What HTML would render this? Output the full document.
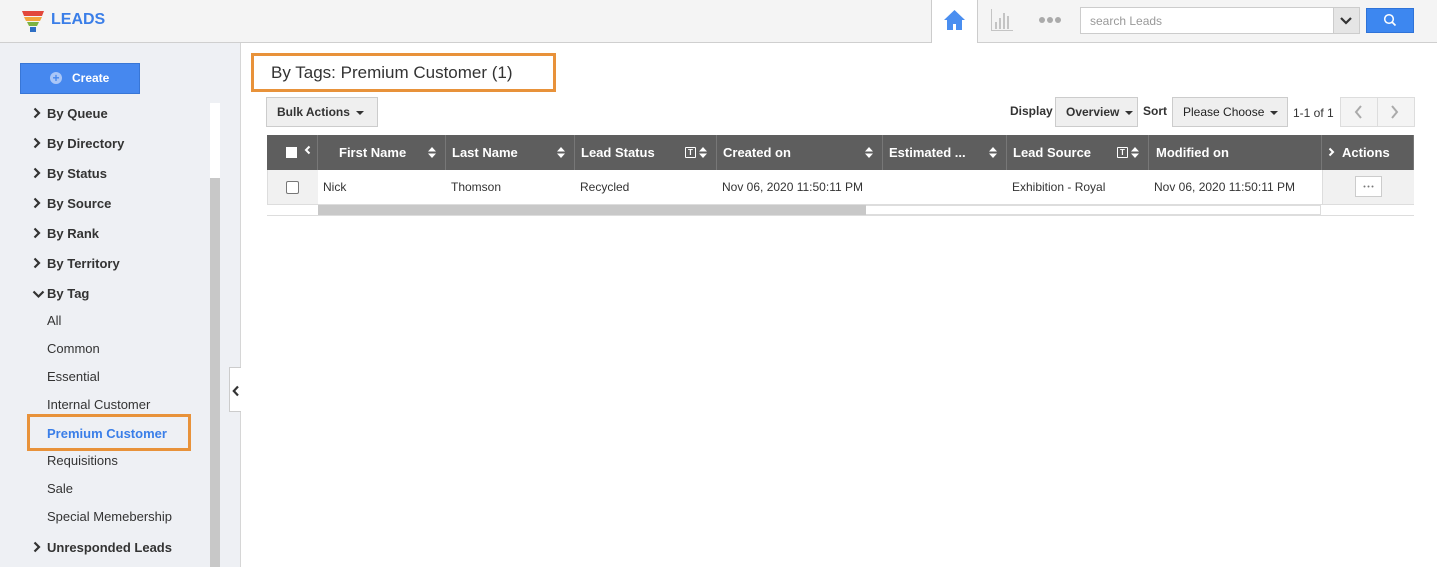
<!DOCTYPE html>
<html><head><meta charset="utf-8"><style>
*{box-sizing:border-box;margin:0;padding:0}
body{width:1437px;height:567px;overflow:hidden;font-family:"Liberation Sans",Arial,sans-serif;background:#fff;position:relative;color:#333}
.a{position:absolute}
.hdr{left:0;top:0;width:1437px;height:43px;background:#f4f4f4;border-bottom:1px solid #cfcfcf}
.side{left:0;top:43px;width:241px;height:524px;background:#eef0f4;border-right:1px solid #d6d6d6}
.nav{left:47px;font-size:13px;font-weight:bold;color:#333}
.sub{left:47px;font-size:13px;color:#333}
.chev{left:33px;width:8px;height:12px}
.th{top:135px;height:35px;background:#5e5e5e;color:#fff;font-size:13px;font-weight:bold;line-height:35px;padding-left:8px;border-right:1px solid #777}
.td{top:170px;height:35px;font-size:12px;line-height:35px;padding-left:5px;border-bottom:1px solid #ddd;background:#fff}
.srt{position:absolute;right:9px;top:12px;width:8px;height:11px}
.flt{position:absolute;right:20px;top:12px;width:11px;height:11px;border:1px solid #fff;border-radius:1px;font-size:8px;line-height:9px;text-align:center}
.btn{background:#efefef;border:1px solid #ccc;font-size:12px;font-weight:bold;color:#333;line-height:28px;padding-left:10px}
.car{display:inline-block;width:0;height:0;border-left:4px solid transparent;border-right:4px solid transparent;border-top:4px solid #333;vertical-align:middle;margin-left:6px}
</style></head><body>
<svg width="0" height="0" style="position:absolute"><defs>
<symbol id="ch" viewBox="0 0 8 12"><path d="M1.5 1.5l4.5 4.5-4.5 4.5" stroke="#333" stroke-width="2.2" fill="none"/></symbol>
<symbol id="so" viewBox="0 0 8 11"><path d="M4 0l4 4.5H0zM4 11l4-4.5H0z" fill="#fff"/></symbol>
</defs></svg>
<div class="a hdr"></div>
<svg class="a" style="left:22px;top:10px" width="22" height="23" viewBox="0 0 22 23"><path d="M0 1h22l-2 5H2z" fill="#e2473b"/><path d="M2 7h18l-2 4H4z" fill="#f3a43a"/><path d="M5 12h12l-2 4H7z" fill="#7cb342"/><rect x="8" y="17" width="6" height="5" fill="#2e6fc4"/></svg>
<div class="a" style="left:51px;top:11px;font-size:16px;font-weight:bold;color:#3a7ee8">LEADS</div>
<div class="a" style="left:931px;top:0;width:47px;height:43px;background:#fff;border-left:1px solid #ccc;border-right:1px solid #ccc"></div>
<svg class="a" style="left:943px;top:9px" width="23" height="22" viewBox="0 0 23 22"><path d="M11.5 1L1 11h3v10h6v-6h3v6h6V11h3z" fill="#4a8ef0"/></svg>
<svg class="a" style="left:990px;top:8px" width="24" height="24" viewBox="0 0 24 24" fill="#c4c4c4"><rect x="1" y="1" width="1" height="22"/><rect x="1" y="22" width="22" height="1"/><rect x="5" y="14" width="2" height="7"/><rect x="9" y="10" width="2" height="11"/><rect x="13" y="5" width="2" height="16"/><rect x="17" y="8" width="2" height="13"/></svg>
<svg class="a" style="left:1038px;top:16px" width="24" height="8"><circle cx="4" cy="4" r="3" fill="#aaa"/><circle cx="12" cy="4" r="3" fill="#aaa"/><circle cx="20" cy="4" r="3" fill="#aaa"/></svg>
<div class="a" style="left:1080px;top:7px;width:280px;height:27px;background:#fff;border:1px solid #ccc"></div>
<div class="a" style="left:1090px;top:14px;font-size:12px;color:#999">search Leads</div>
<div class="a" style="left:1333px;top:8px;width:26px;height:25px;background:#e5e5e5;border-left:1px solid #ccc"></div>
<svg class="a" style="left:1340px;top:16px" width="12" height="9"><path d="M1 2l5 5 5-5" stroke="#333" stroke-width="2.2" fill="none"/></svg>
<div class="a" style="left:1366px;top:8px;width:48px;height:25px;background:#3d87f0;border:1px solid #2f73d8"></div>
<svg class="a" style="left:1383px;top:13px" width="14" height="14"><circle cx="6" cy="6" r="4.3" stroke="#fff" stroke-width="1.5" fill="none"/><path d="M9 9l3.5 3.5" stroke="#fff" stroke-width="1.6"/></svg>

<div class="a side"></div>
<div class="a" style="left:20px;top:63px;width:120px;height:31px;background:#4688ef;border:1px solid #3876d6"></div>
<div class="a" style="left:50px;top:72px;width:12px;height:12px;border-radius:50%;background:#a9c6f7;color:#4688ef;font-size:12px;font-weight:bold;line-height:12px;text-align:center">+</div>
<div class="a" style="left:72px;top:71px;font-size:12px;font-weight:bold;color:#fff">Create</div>
<div class="a" style="left:210px;top:103px;width:10px;height:75px;background:#fff"></div>
<div class="a" style="left:210px;top:178px;width:10px;height:389px;background:#c8c8c8"></div>
<div class="a" style="left:229px;top:367px;width:12px;height:45px;background:#fff;border:1px solid #ccc;border-right:none"></div>
<svg class="a" style="left:232px;top:385px" width="8" height="12"><path d="M6 1.5L1.8 6 6 10.5" stroke="#333" stroke-width="2.2" fill="none"/></svg>

<svg class="a chev" style="top:107px"><use href="#ch"/></svg><div class="a nav" style="top:106px">By Queue</div>
<svg class="a chev" style="top:137px"><use href="#ch"/></svg><div class="a nav" style="top:136px">By Directory</div>
<svg class="a chev" style="top:167px"><use href="#ch"/></svg><div class="a nav" style="top:166px">By Status</div>
<svg class="a chev" style="top:197px"><use href="#ch"/></svg><div class="a nav" style="top:196px">By Source</div>
<svg class="a chev" style="top:227px"><use href="#ch"/></svg><div class="a nav" style="top:226px">By Rank</div>
<svg class="a chev" style="top:257px"><use href="#ch"/></svg><div class="a nav" style="top:256px">By Territory</div>
<svg class="a" style="left:32px;top:290px" width="13" height="9"><path d="M1.5 1.5l5 5 5-5" stroke="#333" stroke-width="2.2" fill="none"/></svg>
<div class="a nav" style="top:286px">By Tag</div>
<div class="a sub" style="top:313px">All</div>
<div class="a sub" style="top:341px">Common</div>
<div class="a sub" style="top:369px">Essential</div>
<div class="a sub" style="top:397px">Internal Customer</div>
<div class="a" style="left:27px;top:414px;width:164px;height:37px;border:3px solid #e8923a"></div>
<div class="a sub" style="top:426px;font-weight:bold;color:#3a7ee8">Premium Customer</div>
<div class="a sub" style="top:453px">Requisitions</div>
<div class="a sub" style="top:481px">Sale</div>
<div class="a sub" style="top:509px">Special Memebership</div>
<svg class="a chev" style="top:541px"><use href="#ch"/></svg><div class="a nav" style="top:540px">Unresponded Leads</div>

<div class="a" style="left:251px;top:53px;width:305px;height:39px;border:3px solid #e8923a"></div>
<div class="a" style="left:271px;top:63px;font-size:17px;color:#333">By Tags: Premium Customer (1)</div>
<div class="a btn" style="left:266px;top:97px;width:112px;height:30px">Bulk Actions<span class="car"></span></div>
<div class="a" style="left:1010px;top:104px;font-size:12px;font-weight:bold">Display</div>
<div class="a btn" style="left:1055px;top:97px;width:83px;height:30px">Overview<span class="car"></span></div>
<div class="a" style="left:1143px;top:104px;font-size:12px;font-weight:bold">Sort</div>
<div class="a btn" style="left:1172px;top:97px;width:116px;height:30px;font-weight:normal;color:#222">Please Choose<span class="car"></span></div>
<div class="a" style="left:1293px;top:106px;font-size:12px">1-1 of 1</div>
<div class="a" style="left:1340px;top:97px;width:75px;height:30px;background:#f4f4f4;border:1px solid #ddd"></div>
<div class="a" style="left:1377px;top:97px;width:1px;height:30px;background:#ddd"></div>
<svg class="a" style="left:1353px;top:104px" width="50" height="16"><path d="M8 2l-5 6 5 6M39 2l5 6-5 6" stroke="#aaa" stroke-width="2" fill="none"/></svg>

<div class="a th" style="left:267px;width:51px"></div>
<div class="a" style="left:286px;top:147px;width:11px;height:11px;background:#fff"></div>
<svg class="a" style="left:304px;top:145px" width="7" height="10"><path d="M5.5 1.5L2 5l3.5 3.5" stroke="#fff" stroke-width="2" fill="none"/></svg>
<div class="a th" style="left:318px;width:128px;padding-left:21px">First Name<svg class="srt"><use href="#so"/></svg></div>
<div class="a th" style="left:446px;width:129px;padding-left:6px">Last Name<svg class="srt"><use href="#so"/></svg></div>
<div class="a th" style="left:575px;width:142px;padding-left:6px">Lead Status<span class="flt">T</span><svg class="srt"><use href="#so"/></svg></div>
<div class="a th" style="left:717px;width:166px;padding-left:6px">Created on<svg class="srt"><use href="#so"/></svg></div>
<div class="a th" style="left:883px;width:124px;padding-left:6px">Estimated ...<svg class="srt"><use href="#so"/></svg></div>
<div class="a th" style="left:1007px;width:142px;padding-left:6px">Lead Source<span class="flt">T</span><svg class="srt"><use href="#so"/></svg></div>
<div class="a th" style="left:1149px;width:173px;padding-left:7px">Modified on</div>
<div class="a th" style="left:1322px;width:92px;padding-left:20px">Actions</div>
<svg class="a" style="left:1328px;top:147px" width="7" height="10"><path d="M1.5 1.5L5 5 1.5 8.5" stroke="#fff" stroke-width="2" fill="none"/></svg>

<div class="a td" style="left:267px;width:51px;background:#f1f1f1;border-left:1px solid #ddd"></div>
<div class="a" style="left:286px;top:181px;width:13px;height:13px;border:1px solid #777;border-radius:2px;background:#fff"></div>
<div class="a td" style="left:318px;width:128px">Nick</div>
<div class="a td" style="left:446px;width:129px">Thomson</div>
<div class="a td" style="left:575px;width:142px">Recycled</div>
<div class="a td" style="left:717px;width:166px">Nov 06, 2020 11:50:11 PM</div>
<div class="a td" style="left:883px;width:124px"></div>
<div class="a td" style="left:1007px;width:142px">Exhibition - Royal</div>
<div class="a td" style="left:1149px;width:173px">Nov 06, 2020 11:50:11 PM</div>
<div class="a td" style="left:1322px;width:92px;background:#f1f1f1;border-left:1px solid #ddd"></div>
<div class="a" style="left:1355px;top:176px;width:27px;height:21px;background:#fff;border:1px solid #ccc"></div>
<svg class="a" style="left:1363px;top:185px" width="12" height="3"><circle cx="1.5" cy="1.5" r="1" fill="#777"/><circle cx="5.5" cy="1.5" r="1" fill="#777"/><circle cx="9.5" cy="1.5" r="1" fill="#777"/></svg>
<div class="a" style="left:318px;top:205px;width:1003px;height:10px;background:#fff;border:1px solid #ddd"></div>
<div class="a" style="left:318px;top:205px;width:548px;height:10px;background:#c8c8c8"></div>
<div class="a" style="left:267px;top:215px;width:1147px;height:1px;background:#ddd"></div>
</body></html>
